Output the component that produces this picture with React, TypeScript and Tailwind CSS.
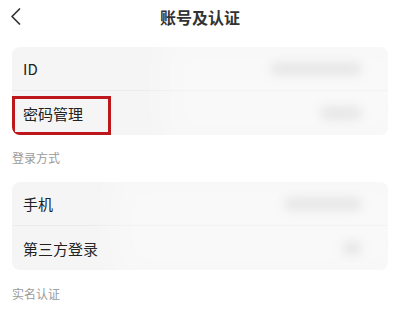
const font = { fontFamily: '"Noto Sans CJK SC", "Noto Sans", sans-serif' };

const Row = ({ label, valueWidth, divider }: { label: string; valueWidth: string; divider?: boolean }) => (
    <div className={`flex h-[44px] items-center justify-between pl-[11px] pr-[26px] ${divider ? "border-b border-[#ececec]" : ""}`}>
        <span className="text-[15px] leading-none text-[#222]">{label}</span>
        <span className={`h-[14px] ${valueWidth} rounded-full bg-[#d9d9d9] blur-[5px]`} />
    </div>
);

export default function App() {
    return (
        <div className="h-[310px] w-[400px] overflow-hidden bg-white" style={font}>
            <div className="relative flex h-[33px] items-center justify-center">
                <svg className="absolute left-0 top-0 h-[33px] w-[33px]" viewBox="0 0 33 33" fill="none">
                    <polyline points="19.5,9 12,16.5 19.5,24" stroke="#333" strokeWidth="1.7" strokeLinecap="round" strokeLinejoin="round" />
                </svg>
                <h1 className="text-[16px] font-semibold leading-none text-[#333]">账号及认证</h1>
            </div>

            <div className="mt-[14px] px-[12px]">
                <div className="relative overflow-hidden rounded-[8px] bg-[#f5f5f5]">
                    <Row label="ID" valueWidth="w-[92px]" divider />
                    <Row label="密码管理" valueWidth="w-[42px]" />
                    <div className="pointer-events-none absolute inset-y-[-10px] left-[150px] right-[-20px] bg-white/40 blur-lg" />
                    <div className="absolute left-0 top-[49px] h-[39px] w-[99px] border-[3px] border-[#bd171b]" />
                </div>
            </div>

            <div className="flex h-[47px] items-center px-[12px] pb-[1px] text-[12px] text-[#9a9a9a]">登录方式</div>

            <div className="px-[12px]">
                <div className="relative overflow-hidden rounded-[8px] bg-[#f5f5f5]">
                    <Row label="手机" valueWidth="w-[78px]" divider />
                    <Row label="第三方登录" valueWidth="w-[20px]" />
                    <div className="pointer-events-none absolute inset-y-[-10px] left-[100px] right-[-20px] bg-white/40 blur-lg" />
                </div>
            </div>

            <div className="flex h-[48px] items-center px-[12px] text-[12px] text-[#9a9a9a]">实名认证</div>
        </div>
    );
}
